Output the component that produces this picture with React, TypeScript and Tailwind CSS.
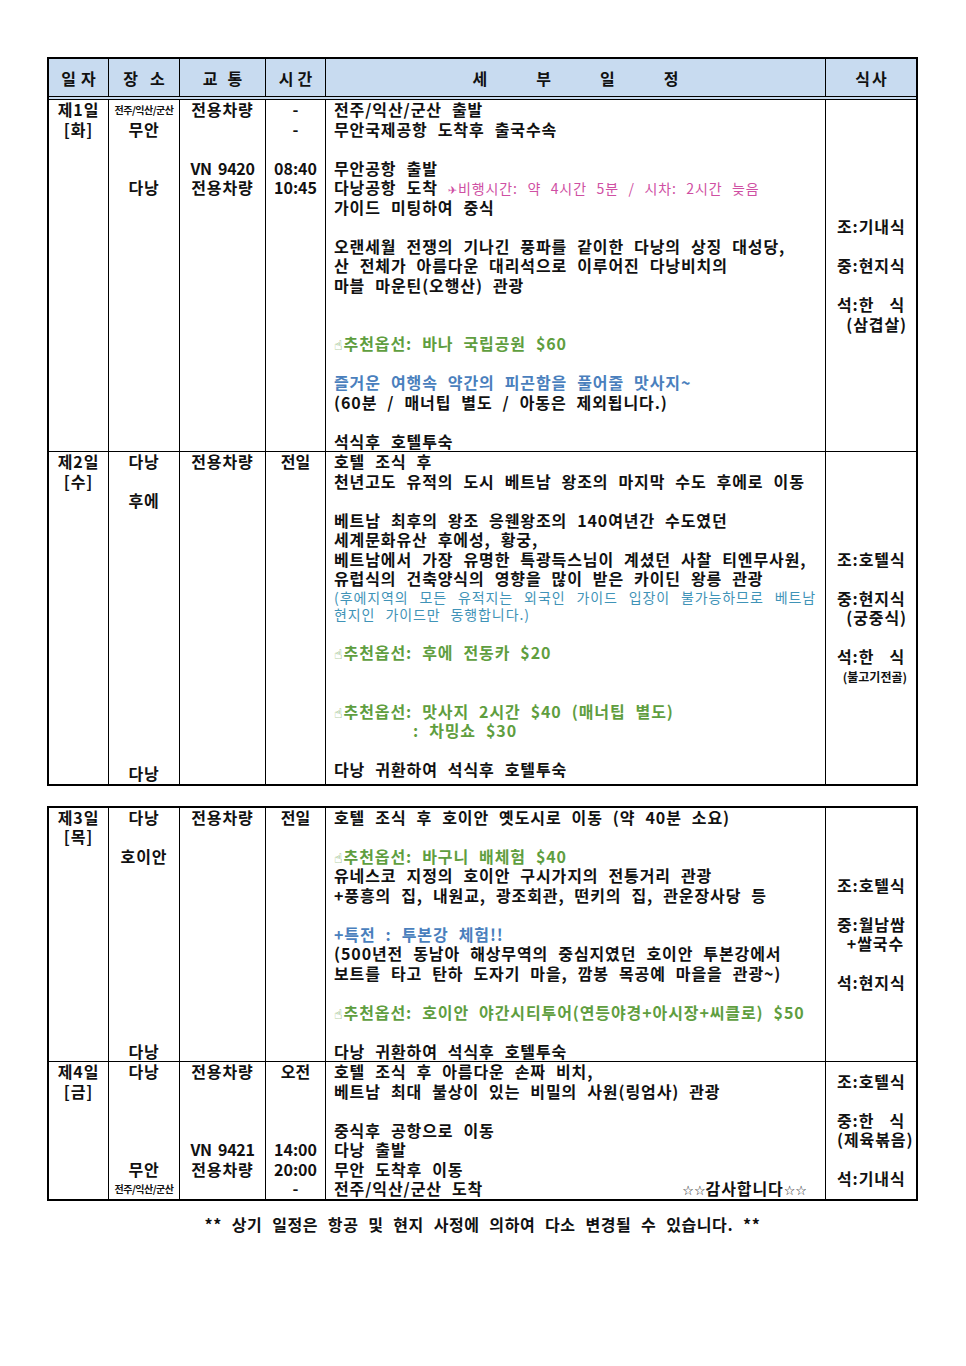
import React from "react";

type N = React.ReactNode;

function L({ children, className = "" }: { children?: N; className?: string }) {
  return <div className={`h-[19.5px] leading-[19.5px] whitespace-pre ${className}`}>{children}</div>;
}

function E() {
  return <div className="h-[19.5px]" />;
}

function Small({ children }: { children: N }) {
  return <div className="h-[19.5px] leading-[19.5px] text-[10px] tracking-[-0.5px] [word-spacing:0px]">{children}</div>;
}

function Hand() {
  return <span className="font-['DejaVu_Sans'] font-normal text-[14px] mr-[1px] tracking-normal">☝</span>;
}

function Opt({ children }: { children: N }) {
  return (
    <L className="text-[#5f9e3f]">
      <Hand />
      {children}
    </L>
  );
}

function Spread({ a, b }: { a: string; b: string }) {
  return (
    <div className="h-[19.5px] leading-[19.5px] w-[68px] flex justify-between">
      <span>{a}</span>
      <span>{b}</span>
    </div>
  );
}

function Row({
  day,
  place,
  trans,
  time,
  detail,
  meals,
  last,
}: {
  day: N;
  place: N;
  trans: N;
  time: N;
  detail: N;
  meals: N;
  last?: boolean;
}) {
  return (
    <div
      className={`grid grid-cols-[60px_71px_86px_60px_500px_90px] ${last ? "" : "border-b border-black"}`}
    >
      <div className="border-r border-black text-center">{day}</div>
      <div className="border-r border-black text-center flex flex-col">{place}</div>
      <div className="border-r border-black text-center">{trans}</div>
      <div className="border-r border-black text-center tracking-normal">{time}</div>
      <div className="border-r border-black pl-[8px] pr-[9px]">{detail}</div>
      <div className="pl-[11px] flex flex-col justify-center">
        <div className="w-[70px]">{meals}</div>
      </div>
    </div>
  );
}

function Empties({ n }: { n: number }) {
  return (
    <>
      {Array.from({ length: n }).map((_, i) => (
        <E key={i} />
      ))}
    </>
  );
}

function Stars() {
  return <span className="font-['DejaVu_Sans'] font-normal text-[13px] tracking-[0px]">☆☆</span>;
}

export default function App() {
  return (
    <div className="w-[966px] min-h-[1366px] bg-white pt-[57px] pl-[47px] font-['Noto_Sans_CJK_KR',sans-serif] font-bold text-[16px] text-[#111] tracking-[0.9px] [word-spacing:5.5px]">
      {/* Table 1 */}
      <div className="w-[871px] border-2 border-black">
        <div className="grid grid-cols-[60px_71px_86px_60px_500px_90px] h-[41px] bg-[#c8dbf0] border-b-4 border-double border-black [word-spacing:0px] tracking-normal">
          <div className="border-r border-black flex items-center justify-center gap-[5px]">
            <span>일</span>
            <span>자</span>
          </div>
          <div className="border-r border-black flex items-center justify-center gap-[12px]">
            <span>장</span>
            <span>소</span>
          </div>
          <div className="border-r border-black flex items-center justify-center gap-[10px]">
            <span>교</span>
            <span>통</span>
          </div>
          <div className="border-r border-black flex items-center justify-center gap-[4px]">
            <span>시</span>
            <span>간</span>
          </div>
          <div className="border-r border-black flex items-center justify-center gap-[49px]">
            <span>세</span>
            <span>부</span>
            <span>일</span>
            <span>정</span>
          </div>
          <div className="flex items-center justify-center gap-[2px]">
            <span>식</span>
            <span>사</span>
          </div>
        </div>

        <Row
          day={
            <>
              <L>제1일</L>
              <L>[화]</L>
            </>
          }
          place={
            <>
              <Small>전주/익산/군산</Small>
              <L>무안</L>
              <E />
              <E />
              <L>다낭</L>
            </>
          }
          trans={
            <>
              <L>전용차량</L>
              <E />
              <E />
              <L className="tracking-[-0.3px] [word-spacing:3px]">VN 9420</L>
              <L>전용차량</L>
            </>
          }
          time={
            <>
              <L>-</L>
              <L>-</L>
              <E />
              <L>08:40</L>
              <L>10:45</L>
            </>
          }
          detail={
            <>
              <L>전주/익산/군산 출발</L>
              <L>무안국제공항 도착후 출국수속</L>
              <E />
              <L>무안공항 출발</L>
              <L>
                다낭공항 도착{" "}
                <span className="text-[#cf4fa3] text-[14px] font-normal">
                  <span className="font-['DejaVu_Sans'] text-[11px]">✈</span>비행시간: 약 4시간 5분 / 시차: 2시간 늦음
                </span>
              </L>
              <L>가이드 미팅하여 중식</L>
              <E />
              <L>오랜세월 전쟁의 기나긴 풍파를 같이한 다낭의 상징 대성당,</L>
              <L>산 전체가 아름다운 대리석으로 이루어진 다낭비치의</L>
              <L>마블 마운틴(오행산) 관광</L>
              <E />
              <E />
              <Opt>추천옵선: 바나 국립공원 $60</Opt>
              <E />
              <L className="text-[#4a7fbd]">즐거운 여행속 약간의 피곤함을 풀어줄 맛사지~</L>
              <L>(60분 / 매너팁 별도 / 아동은 제외됩니다.)</L>
              <E />
              <L>석식후 호텔투숙</L>
            </>
          }
          meals={
            <>
              <L>조:기내식</L>
              <E />
              <L>중:현지식</L>
              <E />
              <Spread a="석:한" b="식" />
              <L className="text-right">(삼겹살)</L>
            </>
          }
        />

        <Row
          last
          day={
            <>
              <L>제2일</L>
              <L>[수]</L>
            </>
          }
          place={
            <>
              <L>다낭</L>
              <E />
              <L>후에</L>
              <Empties n={13} />
              <L>다낭</L>
            </>
          }
          trans={<L>전용차량</L>}
          time={<L>전일</L>}
          detail={
            <>
              <L>호텔 조식 후</L>
              <L>천년고도 유적의 도시 베트남 왕조의 마지막 수도 후에로 이동</L>
              <E />
              <L>베트남 최후의 왕조 응웬왕조의 140여년간 수도였던</L>
              <L>세계문화유산 후에성, 황궁,</L>
              <L>베트남에서 가장 유명한 특광득스님이 계셨던 사찰 티엔무사원,</L>
              <L>유럽식의 건축양식의 영향을 많이 받은 카이딘 왕릉 관광</L>
              <div className="h-[17.5px] leading-[17.5px] text-[14px] font-normal text-[#3f93b7] [text-align-last:justify] [word-spacing:5px]">
                (후에지역의 모든 유적지는 외국인 가이드 입장이 불가능하므로 베트남
              </div>
              <div className="h-[17.5px] leading-[17.5px] text-[14px] font-normal text-[#3f93b7] [word-spacing:6px]">
                현지인 가이드만 동행합니다.)
              </div>
              <E />
              <Opt>추천옵선: 후에 전동카 $20</Opt>
              <E />
              <E />
              <Opt>추천옵선: 맛사지 2시간 $40 (매너팁 별도)</Opt>
              <L className="text-[#5f9e3f] pl-[79px]">: 차밍쇼 $30</L>
              <E />
              <L>다낭 귀환하여 석식후 호텔투숙</L>
            </>
          }
          meals={
            <>
              <L>조:호텔식</L>
              <E />
              <L>중:현지식</L>
              <L className="text-right">(궁중식)</L>
              <E />
              <Spread a="석:한" b="식" />
              <div className="h-[19.5px] leading-[19.5px] text-[12px] text-right tracking-normal [word-spacing:0px]">(불고기전골)</div>
            </>
          }
        />
      </div>

      {/* Table 2 */}
      <div className="w-[871px] border-2 border-black mt-[20px]">
        <Row
          day={
            <>
              <L>제3일</L>
              <L>[목]</L>
            </>
          }
          place={
            <>
              <L>다낭</L>
              <E />
              <L>호이안</L>
              <Empties n={9} />
              <L>다낭</L>
            </>
          }
          trans={<L>전용차량</L>}
          time={<L>전일</L>}
          detail={
            <>
              <L>호텔 조식 후 호이안 옛도시로 이동 (약 40분 소요)</L>
              <E />
              <Opt>추천옵선: 바구니 배체험 $40</Opt>
              <L>유네스코 지정의 호이안 구시가지의 전통거리 관광</L>
              <L>+풍흥의 집, 내원교, 광조회관, 떤키의 집, 관운장사당 등</L>
              <E />
              <L className="text-[#4a7fbd]">+특전 : 투본강 체험!!</L>
              <L>(500년전 동남아 해상무역의 중심지였던 호이안 투본강에서</L>
              <L>보트를 타고 탄하 도자기 마을, 깜봉 목공예 마을을 관광~)</L>
              <E />
              <Opt>추천옵선: 호이안 야간시티투어(연등야경+아시장+씨클로) $50</Opt>
              <E />
              <L>다낭 귀환하여 석식후 호텔투숙</L>
            </>
          }
          meals={
            <>
              <L>조:호텔식</L>
              <E />
              <L>중:월남쌈</L>
              <L className="text-right pr-[3px]">+쌀국수</L>
              <E />
              <L>석:현지식</L>
            </>
          }
        />
        <Row
          last
          day={
            <>
              <L>제4일</L>
              <L>[금]</L>
            </>
          }
          place={
            <>
              <L>다낭</L>
              <Empties n={4} />
              <L>무안</L>
              <Small>전주/익산/군산</Small>
            </>
          }
          trans={
            <>
              <L>전용차량</L>
              <Empties n={3} />
              <L className="tracking-[-0.3px] [word-spacing:3px]">VN 9421</L>
              <L>전용차량</L>
            </>
          }
          time={
            <>
              <L>오전</L>
              <Empties n={3} />
              <L>14:00</L>
              <L>20:00</L>
              <L>-</L>
            </>
          }
          detail={
            <>
              <L>호텔 조식 후 아름다운 손짜 비치,</L>
              <L>베트남 최대 불상이 있는 비밀의 사원(링엄사) 관광</L>
              <E />
              <L>중식후 공항으로 이동</L>
              <L>다낭 출발</L>
              <L>무안 도착후 이동</L>
              <div className="h-[19.5px] leading-[19.5px] flex justify-between pr-[9px] whitespace-pre">
                <span>전주/익산/군산 도착</span>
                <span>
                  <Stars />
                  감사합니다
                  <Stars />
                </span>
              </div>
            </>
          }
          meals={
            <>
              <L>조:호텔식</L>
              <E />
              <Spread a="중:한" b="식" />
              <L className="text-right">(제육볶음)</L>
              <E />
              <L>석:기내식</L>
            </>
          }
        />
      </div>

      <div className="w-[871px] mt-[14px] h-[19.5px] leading-[19.5px] text-center whitespace-pre tracking-[0.6px]">
        ** 상기 일정은 항공 및 현지 사정에 의하여 다소 변경될 수 있습니다. **
      </div>
    </div>
  );
}
